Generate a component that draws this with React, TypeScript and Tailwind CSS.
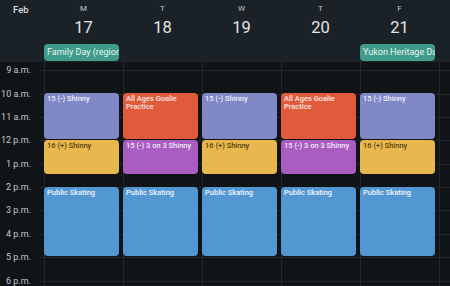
const HOUR = 23.37;
const TOP = 8.3;

type Ev = { title: string; start: number; end: number; kind: keyof typeof KINDS };

const KINDS = {
  shinny: "bg-[#8088c6] text-[#eef0fb]",
  goalie: "bg-[#e05a3c] text-[#fde9e3]",
  plus: "bg-[#e8b84e] text-[#57400f]",
  three: "bg-[#a95dc1] text-[#f6e8fb]",
  skate: "bg-[#5397d2] text-[#eef6ff]",
};

const monLike: Ev[] = [
  { title: "15 (-) Shinny", start: 10, end: 12, kind: "shinny" },
  { title: "16 (+)  Shinny", start: 12, end: 13.5, kind: "plus" },
  { title: "Public Skating", start: 14, end: 17, kind: "skate" },
];

const tueLike: Ev[] = [
  { title: "All Ages Goalie Practice", start: 10, end: 12, kind: "goalie" },
  { title: "15 (-) 3 on 3 Shinny", start: 12, end: 13.5, kind: "three" },
  { title: "Public Skating", start: 14, end: 17, kind: "skate" },
];

const days = [
  { letter: "M", num: 17, allDay: "Family Day (regional holiday)", events: monLike },
  { letter: "T", num: 18, events: tueLike },
  { letter: "W", num: 19, events: monLike },
  { letter: "T", num: 20, events: tueLike },
  { letter: "F", num: 21, allDay: "Yukon Heritage Day", events: monLike },
];

const hours = ["9 a.m.", "10 a.m.", "11 a.m.", "12 p.m.", "1 p.m.", "2 p.m.", "3 p.m.", "4 p.m.", "5 p.m.", "6 p.m."];

function HourRows() {
  return (
    <div className="pt-[8.3px]">
      {hours.map((h) => (
        <div key={h} className="h-[23.37px] border-t border-[#22272b]" />
      ))}
    </div>
  );
}

function DayColumn({ events }: { events: Ev[] }) {
  return (
    <div className="relative w-[79px] shrink-0 border-l border-[#22272b]">
      <HourRows />
      {events.map((e) => (
        <div
          key={e.title + e.start}
          className={`absolute left-[-1px] w-[75px] overflow-hidden rounded-[4px] px-[3px] pt-[2px] text-[7.5px] font-medium leading-[8px] ${KINDS[e.kind]}`}
          style={{
            top: TOP + (e.start - 9) * HOUR - 0.4,
            height: (e.end - e.start) * HOUR - 1,
          }}
        >
          {e.title}
        </div>
      ))}
    </div>
  );
}

export default function App() {
  return (
    <div
      className="h-[286px] w-[450px] overflow-hidden bg-[#111417] text-[#d8dcdf]"
      style={{ fontFamily: "Roboto, 'Noto Sans', sans-serif" }}
    >
      <div className="flex h-[62px] border-b border-[#1f2529] bg-[#1b2227]">
        <div className="w-[44px] shrink-0 pl-[13px] pt-[3px] text-[9.5px] font-medium">Feb</div>
        {days.map((d) => (
          <div key={d.num} className="flex w-[79px] shrink-0 flex-col">
            <div className="pt-[4px] text-center text-[8px] leading-[10px] text-[#bfc5c9]">{d.letter}</div>
            <div className="pt-[5px] text-center text-[16.5px] leading-[18px] text-[#e3e6e8]">{d.num}</div>
            <div className="h-[7px]" />
            {d.allDay && (
              <div className="h-[17px] w-[75px] overflow-hidden whitespace-nowrap rounded-[4px] bg-[#3f9b8a] px-[3px] text-[9px] leading-[17px] text-[#e8f6f2]">
                {d.allDay}
              </div>
            )}
          </div>
        ))}
        <div className="flex-1" />
      </div>

      <div className="flex h-[224px] overflow-hidden">
        <div className="w-[44px] shrink-0 pt-[8.3px]">
          {hours.map((h) => (
            <div key={h} className="relative h-[23.37px]">
              <span className="absolute right-[13px] top-[-6px] text-[9px] leading-[12px] text-[#c3c8cb]">{h}</span>
              <span className="absolute right-0 top-0 h-px w-[4px] bg-[#22272b]" />
            </div>
          ))}
        </div>
        {days.map((d) => (
          <DayColumn key={d.num} events={d.events} />
        ))}
        <div className="flex-1 border-l border-[#22272b]">
          <HourRows />
        </div>
      </div>
    </div>
  );
}
